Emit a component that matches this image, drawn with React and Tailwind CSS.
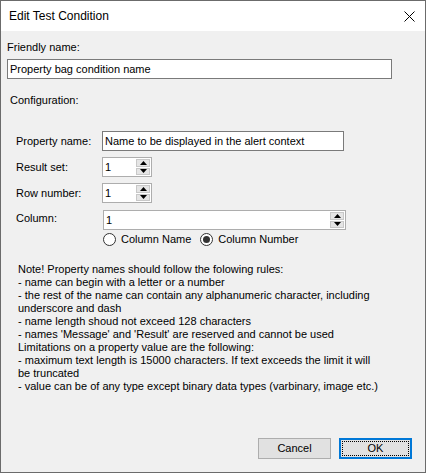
import React from 'react'

const FONT = { fontFamily: '"Liberation Sans", Arial, sans-serif' }

const NOTE_LINES = [
  'Note! Property names should follow the folowing rules:',
  '- name can begin with a letter or a number',
  '- the rest of the name can contain any alphanumeric character, including',
  'underscore and dash',
  '- name length shoud not exceed 128 characters',
  "- names 'Message' and 'Result' are reserved and cannot be used",
  'Limitations on a property value are the following:',
  '- maximum text length is 15000 characters. If text exceeds the limit it will',
  'be truncated',
  '- value can be of any type except binary data types (varbinary, image etc.)',
]

function SpinButtons() {
  return (
    <div className="flex flex-col w-[15px] h-full py-[1px] pr-[1px] gap-[1px]">
      <div className="flex-1 flex items-center justify-center bg-[#e5e5e5] border border-[#c8c8c8]">
        <svg width="7" height="4" viewBox="0 0 7 4">
          <path d="M3.5 0L7 4H0z" fill="#000" />
        </svg>
      </div>
      <div className="flex-1 flex items-center justify-center bg-[#e5e5e5] border border-[#c8c8c8]">
        <svg width="7" height="4" viewBox="0 0 7 4">
          <path d="M0 0h7L3.5 4z" fill="#000" />
        </svg>
      </div>
    </div>
  )
}

function Spinner({ width }) {
  return (
    <div className={`flex items-stretch h-[20px] bg-white border border-[#adadad] ${width}`}>
      <div className="flex-1 pl-[2px] leading-[18px] text-[11px] text-black">1</div>
      <SpinButtons />
    </div>
  )
}

function Radio({ checked, label }) {
  return (
    <div className="flex items-center gap-[5px]">
      <div className="w-[13px] h-[13px] rounded-full border border-[#333] bg-white flex items-center justify-center">
        {checked && <div className="w-[7px] h-[7px] rounded-full bg-[#333]" />}
      </div>
      <span className="text-[11px] leading-[13px] text-black">{label}</span>
    </div>
  )
}

export default function App() {
  return (
    <div style={FONT} className="w-[426px] h-[473px] border border-[#6b6b6b] flex flex-col bg-[#f0f0f0]">
      {/* Title bar */}
      <div className="h-[30px] bg-white flex items-center justify-between pl-[8px] pr-[10px]">
        <span className="text-[12px] text-black">Edit Test Condition</span>
        <svg width="11" height="11" viewBox="0 0 11 11">
          <path d="M0.5 0.5L10.5 10.5M10.5 0.5L0.5 10.5" stroke="#000" strokeWidth="1" />
        </svg>
      </div>

      <div className="flex-1 flex flex-col px-[6px] text-[11px] text-black">
        <div className="mt-[10px] leading-[13px]">Friendly name:</div>
        <div className="mt-[5px] w-[385px] h-[20px] bg-white border border-[#7a7a7a] pl-[2px] leading-[18px]">
          Property bag condition name
        </div>
        <div className="mt-[15px] ml-[3px] leading-[13px]">Configuration:</div>

        <div className="mt-[24px] flex flex-col">
          <div className="flex items-center">
            <div className="w-[95px] pl-[9px] leading-[13px]">Property name:</div>
            <div className="w-[242px] h-[20px] bg-white border border-[#7a7a7a] pl-[2px] leading-[18px]">
              Name to be displayed in the alert context
            </div>
          </div>
          <div className="flex items-center mt-[6px]">
            <div className="w-[95px] pl-[9px] leading-[13px]">Result set:</div>
            <Spinner width="w-[50px]" />
          </div>
          <div className="flex items-center mt-[6px]">
            <div className="w-[95px] pl-[9px] leading-[13px]">Row number:</div>
            <Spinner width="w-[50px]" />
          </div>
          <div className="flex items-start mt-[7px]">
            <div className="w-[96px] pl-[9px] leading-[13px] pt-[2px]">Column:</div>
            <div className="flex flex-col">
              <Spinner width="w-[243px]" />
              <div className="flex items-center gap-[9px] mt-[3px]">
                <Radio label="Column Name" />
                <Radio checked label="Column Number" />
              </div>
            </div>
          </div>
        </div>

        <div className="mt-[17px] pl-[11px] flex flex-col leading-[13px]">
          {NOTE_LINES.map((line, i) => (
            <div key={i} className="whitespace-nowrap">{line}</div>
          ))}
        </div>

        <div className="mt-auto mb-[13px] flex justify-end gap-[8px] pr-[7px]">
          <div className="w-[73px] h-[21px] flex items-center justify-center bg-[#e1e1e1] border border-[#adadad]">
            Cancel
          </div>
          <div className="w-[73px] h-[21px] flex items-center justify-center bg-[#e1e1e1] border-2 border-[#0078d7] p-[1px]">
            <div className="w-full h-full flex items-center justify-center border border-dotted border-black">
              OK
            </div>
          </div>
        </div>
      </div>
    </div>
  )
}
